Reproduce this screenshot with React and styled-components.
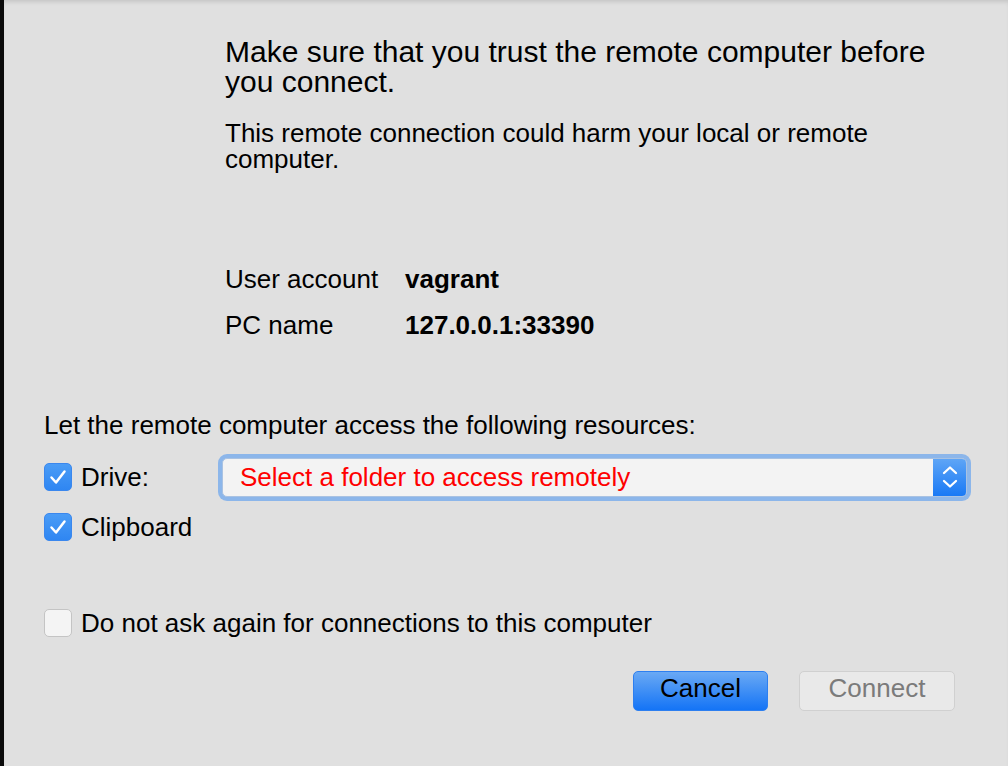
import styled, { createGlobalStyle } from "styled-components";

const GlobalStyle = createGlobalStyle`
  html, body {
    margin: 0;
    padding: 0;
    background: #e0e0e0;
  }
  body {
    font-family: "Liberation Sans", Arial, Helvetica, sans-serif;
    color: #000;
  }
`;

const Window = styled.div`
  width: 1008px;
  height: 766px;
  box-sizing: border-box;
  border-left: 4px solid #0a0a0a;
  background: #e0e0e0;
  box-shadow: inset 0 4px 4px -2px rgba(0, 0, 0, 0.12);
  padding: 37px 37px 0 40px;
  display: flex;
  flex-direction: column;
`;

const Warning = styled.div`
  padding-left: 181px;
  max-width: 710px;
  display: flex;
  flex-direction: column;
`;

const Heading = styled.h1`
  margin: 0;
  font-size: 30px;
  font-weight: normal;
  line-height: 30px;
`;

const Note = styled.p`
  margin: 23px 0 0;
  font-size: 26px;
  line-height: 26px;
`;

const InfoGrid = styled.div`
  margin: 92px 0 0 181px;
  display: grid;
  grid-template-columns: 180px auto;
  row-gap: 16px;
  font-size: 26px;
  line-height: 30px;
`;

const InfoValue = styled.span`
  font-weight: bold;
`;

const Resources = styled.div`
  margin-top: 70px;
  display: flex;
  flex-direction: column;
`;

const ResourcesTitle = styled.div`
  font-size: 26px;
  line-height: 30px;
`;

const CheckRow = styled.div`
  display: flex;
  align-items: center;
  height: ${(p) => p.height || 46}px;
  margin-top: ${(p) => p.offset || 0}px;
`;

const Box = styled.span`
  width: 28px;
  height: 28px;
  box-sizing: border-box;
  border-radius: 5px;
  flex-shrink: 0;
  display: flex;
  align-items: center;
  justify-content: center;
  background: ${(p) => (p.checked ? "linear-gradient(#4a9cf6, #2f86f2)" : "#f4f4f4")};
  border: 1px solid ${(p) => (p.checked ? "#3a87ee" : "#c4c4c4")};
`;

const CheckLabel = styled.span`
  margin-left: 9px;
  font-size: 26px;
  line-height: 30px;
  flex-shrink: 0;
  width: ${(p) => (p.width ? `${p.width}px` : "auto")};
`;

const Select = styled.div`
  flex: 1;
  height: 47px;
  box-sizing: border-box;
  border-radius: 9px;
  background: #8cb6ea;
  padding: 4px;
  display: flex;
`;

const SelectField = styled.div`
  flex: 1;
  display: flex;
  align-items: center;
  background: #f3f3f3;
  border-radius: 5px;
  border: 1px solid #a9c2e2;
  overflow: hidden;
`;

const SelectText = styled.span`
  flex: 1;
  padding-left: 17px;
  color: #ff0000;
  font-size: 26px;
  line-height: 30px;
`;

const Stepper = styled.span`
  width: 33px;
  align-self: stretch;
  background: linear-gradient(#5ea5f6, #1979f5);
  display: flex;
  align-items: center;
  justify-content: center;
`;

const Footer = styled.div`
  margin-top: 46px;
  display: flex;
  flex-direction: column;
`;

const Buttons = styled.div`
  margin: 25px 16px 0 0;
  display: flex;
  justify-content: flex-end;
  gap: 31px;
`;

const Button = styled.button`
  width: ${(p) => p.width}px;
  height: 40px;
  border-radius: 5px;
  font-family: "Liberation Sans", Arial, sans-serif;
  font-size: 26px;
  line-height: 30px;
  padding: 0 0 7px;
  cursor: pointer;
  background: ${(p) => (p.primary ? "linear-gradient(#6aa9f4, #1474f6)" : "#e9e9e9")};
  border: 1px solid ${(p) => (p.primary ? "#2d7ff0" : "#d0d0d0")};
  color: ${(p) => (p.primary ? "#000" : "#7b7b7b")};
`;

function Check() {
  return (
    <svg width="20" height="18" viewBox="0 0 20 18">
      <path
        d="M3.5 9.5 L8 14.5 L16.5 3.5"
        fill="none"
        stroke="#fff"
        strokeWidth="2.5"
        strokeLinecap="round"
        strokeLinejoin="round"
      />
    </svg>
  );
}

function Chevrons() {
  return (
    <svg width="18" height="28" viewBox="0 0 18 28">
      <path
        d="M3 10 L9 4.5 L15 10 M3 18 L9 23.5 L15 18"
        fill="none"
        stroke="#fff"
        strokeWidth="2.3"
        strokeLinecap="round"
        strokeLinejoin="round"
      />
    </svg>
  );
}

export default function App() {
  return (
    <>
      <GlobalStyle />
      <Window>
        <Warning>
          <Heading>
            Make sure that you trust the remote computer before you connect.
          </Heading>
          <Note>
            This remote connection could harm your local or remote computer.
          </Note>
        </Warning>

        <InfoGrid>
          <span>User account</span>
          <InfoValue>vagrant</InfoValue>
          <span>PC name</span>
          <InfoValue>127.0.0.1:33390</InfoValue>
        </InfoGrid>

        <Resources>
          <ResourcesTitle>
            Let the remote computer access the following resources:
          </ResourcesTitle>
          <CheckRow offset={14}>
            <Box checked>
              <Check />
            </Box>
            <CheckLabel width={137}>Drive:</CheckLabel>
            <Select>
              <SelectField>
                <SelectText>Select a folder to access remotely</SelectText>
                <Stepper>
                  <Chevrons />
                </Stepper>
              </SelectField>
            </Select>
          </CheckRow>
          <CheckRow height={54}>
            <Box checked>
              <Check />
            </Box>
            <CheckLabel>Clipboard</CheckLabel>
          </CheckRow>
        </Resources>

        <Footer>
          <CheckRow>
            <Box />
            <CheckLabel>Do not ask again for connections to this computer</CheckLabel>
          </CheckRow>
          <Buttons>
            <Button primary width={135}>
              Cancel
            </Button>
            <Button width={156}>Connect</Button>
          </Buttons>
        </Footer>
      </Window>
    </>
  );
}
